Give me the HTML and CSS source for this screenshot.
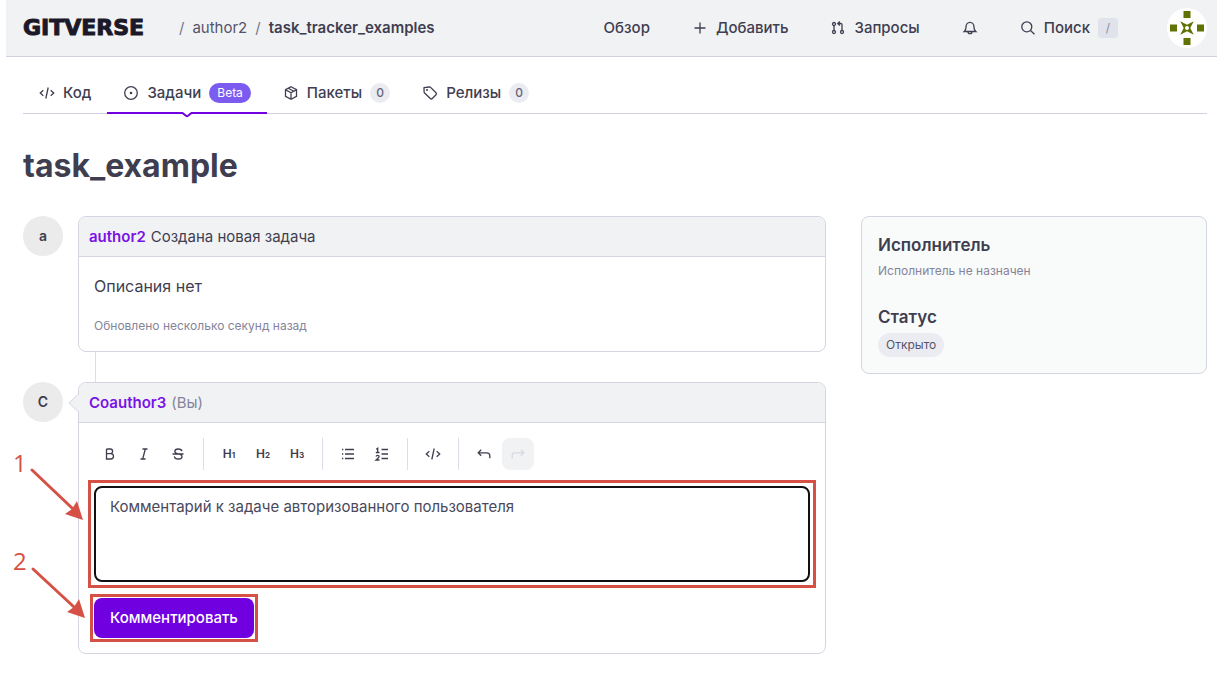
FILE: index.html
```html
<!DOCTYPE html>
<html lang="ru">
<head>
<meta charset="utf-8">
<meta name="viewport" content="width=device-width, initial-scale=1">
<title>task_example</title>
<link rel="stylesheet" href="styles.css">
</head>
<body>
<header class="topbar">
  <a class="logo" href="#">GITVERSE</a>
  <nav class="crumbs" aria-label="Путь">
    <span class="slash">/</span><a href="#">author2</a><span class="slash">/</span><a class="current" href="#">task_tracker_examples</a>
  </nav>
  <nav class="menu" aria-label="Меню">
    <a href="#">Обзор</a>
    <button type="button"><svg class="icon" viewBox="0 0 16 16"><path d="M2.500 8h11M8 2.500v11"/></svg>Добавить</button>
    <a href="#"><svg class="icon" viewBox="0 0 16 16"><circle cx="4" cy="4" r="1.500"/><circle cx="4" cy="12" r="1.500"/><circle cx="12" cy="12" r="1.500"/><path d="M4 5.500v5M12 10.500V4.800Q12 3.500 10.700 3.500H8M9.800 1.500l-2 2 2 2"/></svg>Запросы</a>
    <button type="button" class="bell" aria-label="Уведомления"><svg class="icon" viewBox="0 0 16 16"><path d="M2.300 11.500h11.400c-1.300-1-1.700-2.200-1.700-4.500 0-2.800-1.700-4.700-4-4.700S4 4.200 4 7c0 2.300-.4 3.500-1.700 4.500zM6 11.700c0 1.200.8 2 2 2s2-.8 2-2"/></svg></button>
    <button type="button"><svg class="icon" viewBox="0 0 16 16"><circle cx="6.800" cy="6.800" r="5"/><path d="M10.500 10.500l4 3.800"/></svg>Поиск<kbd>/</kbd></button>
  </nav>
  <a class="profile" href="#" aria-label="Профиль"><svg viewBox="0 0 40 40"><circle cx="20" cy="20" r="20" fill="#fff"/><g fill="#5f7303"><path d="M16.500 3h7v7h-7zM16.500 30h7v7h-7zM3 16.500h7v7H3zM30 16.500h7v7h-7z"/><path d="M13.300 13.300l6.700 3.400 6.700-3.400-3.400 6.700 3.400 6.700-6.700-3.400-6.700 3.400 3.400-6.700z"/></g><circle cx="20" cy="20" r="2" fill="#fff"/></svg></a>
</header>

<main class="page">
  <nav class="tabs" aria-label="Разделы">
    <a class="tab" href="#"><svg class="icon" viewBox="0 0 16 16"><path d="M4.300 5.300L1.300 8l3 2.700M11.700 5.300l3 2.700-3 2.700M9.200 2.500l-2.400 11"/></svg>Код</a>
    <a class="tab active" href="#" aria-current="page"><svg class="icon" viewBox="0 0 16 16"><circle cx="8" cy="8" r="6.300"/><circle class="dot" cx="8" cy="8" r="1.300"/></svg>Задачи<span class="beta">Beta</span><svg class="notch" viewBox="0 0 12 6"><path class="gap" d="M1 0h10v2H1z"/><path d="M0 1h1.500L5 3.800q1 .8 2 0L10.500 1H12"/></svg></a>
    <a class="tab" href="#"><svg class="icon" viewBox="0 0 16 16"><path d="M8 1.700l5.500 3v6.600L8 14.300l-5.500-3V4.700zM2.500 4.700L8 7.700l5.500-3M8 7.700v6.600M5.300 3.200l5.500 3"/></svg>Пакеты<span class="count">0</span></a>
    <a class="tab" href="#"><svg class="icon" viewBox="0 0 16 16"><path d="M2 2.700l5.300-.7q.8-.1 1.300.4l5.400 5.400q1 1 0 2l-3.700 3.700q-1 1-2 0L2.600 8q-.5-.5-.5-1.200z"/><circle class="dot" cx="5" cy="5" r="1"/></svg>Релизы<span class="count">0</span></a>
  </nav>

  <h1>task_example</h1>

  <div class="columns">
    <div class="thread">
      <article class="entry">
        <span class="avatar">a</span>
        <div class="card">
          <div class="card-head"><a href="#">author2</a><span>Создана новая задача</span></div>
          <div class="card-body">
            <p class="description">Описания нет</p>
            <p class="note">Обновлено несколько секунд назад</p>
          </div>
        </div>
      </article>
      <article class="entry reply">
        <span class="avatar">C</span>
        <form class="card">
          <svg class="pointer" viewBox="0 0 12 20"><path class="pointer-fill" d="M12 0L1 10l11 10z"/><path d="M11 .5L1 10l10 9.500"/></svg>
          <div class="card-head"><a href="#">Coauthor3</a><span class="muted">(Вы)</span></div>
          <div class="card-body editor">
            <div class="toolbar">
              <button type="button" aria-label="Полужирный"><svg class="icon" viewBox="0 0 16 16"><path d="M4.500 3v10h4.300a2.700 2.700 0 0 0 0-5.400H4.500M4.500 3h3.800a2.300 2.300 0 0 1 0 4.600"/></svg></button>
              <button type="button" aria-label="Курсив"><svg class="icon" viewBox="0 0 16 16"><path d="M6.500 3h5M4.500 13h5M9.300 3L6.700 13"/></svg></button>
              <button type="button" aria-label="Зачёркнутый"><svg class="icon" viewBox="0 0 16 16"><path d="M12 5.200C11.700 3.700 10.200 3 8.300 3 6.300 3 4.800 3.800 4.800 5.400c0 3.300 7.200 1.700 7.200 5 0 1.700-1.600 2.600-3.700 2.600s-3.700-.9-3.900-2.600M2.500 8h11"/></svg></button>
              <i class="divider"></i>
              <button type="button" class="heading">H<small>1</small></button>
              <button type="button" class="heading">H<small>2</small></button>
              <button type="button" class="heading">H<small>3</small></button>
              <i class="divider"></i>
              <button type="button" aria-label="Список"><svg class="icon" viewBox="0 0 16 16"><path d="M5 3.500h9M5 8h9M5 12.500h9M2 3.500h1.300M2 8h1.300M2 12.500h1.300"/></svg></button>
              <button type="button" aria-label="Нумерованный список"><svg class="icon" viewBox="0 0 16 16"><path d="M7.500 3.500H14M7.500 8H14M7.500 12.500H14M2.200 3.200l1.500-1V6.500M1.800 6.500h3.700M2 10.500q.4-1.200 1.600-1.200 1.500 0 1.500 1.200 0 .9-3 3.500h3.400"/></svg></button>
              <i class="divider"></i>
              <button type="button" aria-label="Код"><svg class="icon" viewBox="0 0 16 16"><path d="M4.300 5.300L1.300 8l3 2.700M11.700 5.300l3 2.700-3 2.700M9.200 2.500l-2.400 11"/></svg></button>
              <i class="divider"></i>
              <button type="button" aria-label="Отменить"><svg class="icon" viewBox="0 0 16 16"><path d="M5.200 3.800L2.200 6.800l3 3M2.500 6.800h8.300q3 0 3 3v2.500"/></svg></button>
              <button type="button" aria-label="Повторить" disabled><svg class="icon" viewBox="0 0 16 16"><path d="M10.800 3.800l3 3-3 3M13.500 6.800H5.200q-3 0-3 3v2.500"/></svg></button>
            </div>
            <div class="marked marked-text">
              <textarea aria-label="Комментарий">Комментарий к задаче авторизованного пользователя</textarea>
              <svg class="callout" viewBox="0 0 76 72"><text x="1" y="19">1</text><path d="M20 17l40 38"/><path class="head" d="M71 67l-18-6 7-5 5-8z"/></svg>
            </div>
            <div class="marked marked-button">
              <button type="submit" class="submit">Комментировать</button>
              <svg class="callout" viewBox="0 0 76 72"><text x="1" y="19">2</text><path d="M21 18l41 38"/><path class="head" d="M73 67l-18-6 7-5 5-8z"/></svg>
            </div>
          </div>
        </form>
      </article>
    </div>
    <aside class="sidebar">
      <section><h2>Исполнитель</h2><p class="note">Исполнитель не назначен</p></section>
      <section><h2>Статус</h2><span class="status">Открыто</span></section>
    </aside>
  </div>
</main>
</body>
</html>
```
FILE: styles.css
```css
* { box-sizing: border-box; }

body {
  margin: 0;
  padding-left: 6px;
  background: #fff;
  color: #3f3e50;
  font: 15px/24px Inter, "Liberation Sans", sans-serif;
}

a { color: inherit; text-decoration: none; }
p, h1, h2 { margin: 0; }

button {
  display: inline-flex;
  align-items: center;
  border: 0;
  padding: 0;
  background: none;
  color: inherit;
  font: inherit;
  cursor: pointer;
}

.icon {
  width: 16px;
  height: 16px;
  flex: none;
  fill: none;
  stroke: currentColor;
  stroke-width: 1.3;
}
.icon .dot { fill: currentColor; stroke: none; }

/* Top bar */
.topbar {
  display: flex;
  align-items: center;
  height: 57px;
  padding: 0 10px 0 17px;
  background: #f1f2f4;
  border-bottom: 1px solid #cfd1de;
}
.logo {
  min-width: 149px;
  color: #1b1929;
  font: bold 22px/24px "DejaVu Sans", sans-serif;
  -webkit-text-stroke: 1px currentColor;
}
.crumbs { display: flex; gap: 8px; padding-left: 7px; color: #55546a; }
.crumbs .current { color: #3f3e50; font-weight: 600; }
.slash { color: #77768c; }
.menu {
  display: flex;
  align-items: center;
  gap: 42px;
  margin-left: auto;
  font-weight: 500;
}
.menu a, .menu button { display: flex; align-items: center; gap: 8px; }
kbd {
  width: 20px;
  border-radius: 4px;
  background: #e1e3ec;
  color: #8b8a9e;
  font: 12px/20px Inter, sans-serif;
  text-align: center;
}
.profile { width: 40px; height: 40px; margin-left: 49px; }
.profile svg { display: block; }

/* Tabs */
.page { padding: 16px 10px 20px 17px; }
.tabs { display: flex; border-bottom: 1px solid #cfd1de; font-weight: 500; }
.tab {
  position: relative;
  display: flex;
  align-items: center;
  gap: 8px;
  height: 40px;
  padding: 0 16px;
}
.tab.active { box-shadow: 0 1px #7000e0, inset 0 -1px #7000e0; }
.beta {
  padding: 0 8px;
  border-radius: 10px;
  background: #7c5cf0;
  color: #fff;
  font: 12px/20px Inter, sans-serif;
}
.count {
  width: 20px;
  border-radius: 10px;
  background: #ebecf1;
  color: #66657b;
  font: 500 12px/20px Inter, sans-serif;
  text-align: center;
}
.notch {
  position: absolute;
  left: calc(50% - 6px);
  top: 39px;
  width: 12px;
  height: 6px;
  fill: none;
  stroke: #7000e0;
  stroke-width: 2;
}
.notch .gap { fill: #fff; stroke: none; }

h1 { margin: 32px 0 30px; font-size: 32px; line-height: 40px; font-weight: 700; }

/* Thread */
.columns {
  display: grid;
  grid-template-columns: minmax(0, 1fr) 346px;
  gap: 35px;
  align-items: start;
}
.entry { display: grid; grid-template-columns: 40px minmax(0, 1fr); gap: 15px; }
.reply { position: relative; padding-top: 30px; }
.reply::before {
  content: "";
  position: absolute;
  left: 72px;
  top: 0;
  height: 30px;
  border-left: 1px solid #dcdde6;
}
.avatar {
  height: 40px;
  border-radius: 50%;
  background: #ebebeb;
  font-size: 14px;
  line-height: 40px;
  font-weight: 600;
  text-align: center;
}
.card {
  position: relative;
  border: 1px solid #d3d6e2;
  border-radius: 8px;
}
.card-head {
  display: flex;
  gap: 5px;
  padding: 8px 10px 7px;
  background: #f1f2f4;
  border-bottom: 1px solid #d3d6e2;
  border-radius: 7px 7px 0 0;
}
.card-head a { color: #7a12e6; font-weight: 600; }
.card-head .muted { color: #85849a; }
.card-body { padding: 16px 15px; }
.card-body.editor { padding: 15px; }
.description { padding: 1px 0; font-size: 16px; }
.note { color: #85849a; font-size: 12px; line-height: 18px; }
.description + .note { padding-top: 18px; }
.pointer {
  position: absolute;
  left: -11px;
  top: 10px;
  width: 12px;
  height: 20px;
  fill: none;
  stroke: #d3d6e2;
}
.pointer .pointer-fill { fill: #f1f2f4; stroke: none; }

/* Editor */
.toolbar { display: flex; align-items: center; gap: 2px; margin-bottom: 16px; }
.toolbar button {
  justify-content: center;
  width: 32px;
  height: 32px;
  border-radius: 8px;
}
.toolbar button:disabled { background: #f1f2f4; color: #d7d9e4; }
.toolbar .heading { font-size: 12px; font-weight: 600; }
.heading small { padding-top: 2px; font-size: 8px; font-weight: 700; }
.divider { width: 1px; height: 32px; margin: 0 7px; background: #dcdde6; }

.marked { position: relative; }
.marked::after {
  content: "";
  position: absolute;
  border: 3px solid #d65145;
  pointer-events: none;
}
.marked-text { margin-bottom: 16px; }
.marked-text::after { inset: -6px; }
.marked-button { width: fit-content; }
.marked-button::after { inset: -4px; }

textarea {
  display: block;
  width: 100%;
  height: 96px;
  padding: 7px 14px;
  border: 2px solid #101014;
  border-radius: 8px;
  outline: 0;
  resize: none;
  color: #4a495c;
  font: inherit;
}
.submit {
  height: 40px;
  padding: 0 16px;
  border-radius: 8px;
  background: #7000e0;
  color: #fff;
  font-weight: 500;
}
.callout {
  position: absolute;
  left: -82px;
  top: -33px;
  width: 76px;
  height: 72px;
  overflow: visible;
  fill: none;
  stroke: #d65145;
  stroke-width: 3;
  stroke-linecap: round;
}
.marked-button .callout { top: -47px; }
.callout text { fill: #d65145; stroke: none; font: 24px "Open Sans", sans-serif; }
.callout .head { fill: #d65145; stroke: none; }

/* Sidebar */
.sidebar {
  display: grid;
  gap: 25px;
  padding: 16px;
  border: 1px solid #d3d6e2;
  border-radius: 8px;
  background: #f9fbfa;
}
.sidebar h2 { font-size: 17px; line-height: 24px; font-weight: 600; }
.sidebar .note { padding-top: 5px; }
.status {
  display: inline-block;
  margin-top: 4px;
  padding: 0 8px;
  border-radius: 12px;
  background: #ebecf1;
  color: #55546a;
  font-size: 12px;
  line-height: 24px;
}
```
